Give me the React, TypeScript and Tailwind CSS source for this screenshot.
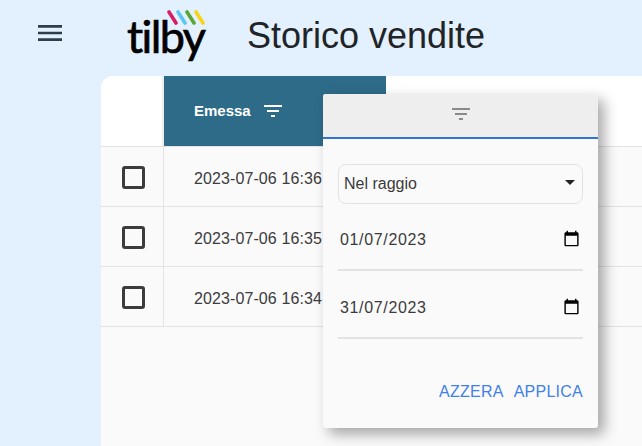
import React from 'react';

const rows = ['2023-07-06 16:36', '2023-07-06 16:35', '2023-07-06 16:34'];
const stripes = [
  { x: 3, color: '#d81e63' },
  { x: 12, color: '#5cc5f2' },
  { x: 21, color: '#5aa63a' },
  { x: 30, color: '#f7d416' },
];

const FilterIcon = ({ className }: { className: string }) => (
  <svg viewBox="0 0 18 12" className={className} fill="currentColor">
    <path d="M0 0h18v2H0zM3 5h12v2H3zM7 10h4v2H7z" />
  </svg>
);

const CalendarIcon = () => (
  <svg viewBox="0 0 24 24" className="w-[17px] h-[17px] text-black" fill="currentColor">
    <path d="M20 3h-1V1h-2v2H7V1H5v2H4c-1.1 0-2 .9-2 2v16c0 1.1.9 2 2 2h16c1.1 0 2-.9 2-2V5c0-1.1-.9-2-2-2zm0 18H4V8h16v13z" />
  </svg>
);

const Logo = () => (
  <div className="relative w-[80px] h-[50px] ml-[26px]">
    <span className="absolute left-0 top-[-2px] text-[45px] leading-[50px] font-normal text-black font-['Lato',sans-serif] tracking-[-1.6px] [-webkit-text-stroke:0.7px_black]">
      tilby
    </span>
    <svg viewBox="0 0 42 16" className="absolute left-[39px] top-[-3px] w-[42px] h-[16px]">
      {stripes.map((s) => (
        <line key={s.x} x1={s.x} y1={2} x2={s.x + 7} y2={13} stroke={s.color} strokeWidth={3.6} strokeLinecap="round" />
      ))}
    </svg>
  </div>
);

const DateField = ({ value }: { value: string }) => (
  <div className="flex items-center justify-between h-[67px] pl-[2px] pr-[3px] pt-[4px] border-b-2 border-[#e3e3e3] text-[16px] tracking-[0.65px] text-[#3a3a3a]">
    <span className="mt-[2px]">{value}</span>
    <CalendarIcon />
  </div>
);

export default function App() {
  return (
    <div className="relative w-[642px] h-[446px] overflow-hidden bg-[#e3f0fd] flex flex-col font-['Liberation_Sans',Arial,sans-serif]">
      <header className="h-[76px] shrink-0 flex items-center">
        <div className="w-[101px] pl-[34px]">
          <svg viewBox="0 0 24 24" className="w-[32px] h-[32px] text-[#2c3e48] -mt-[11px]" fill="currentColor">
            <path d="M3 18h18v-2H3v2zm0-5h18v-2H3v2zm0-7v2h18V6H3z" />
          </svg>
        </div>
        <Logo />
        <h1 className="ml-[40px] -mt-[4px] text-[36px] font-normal text-[#1f2428]">Storico vendite</h1>
      </header>

      <main className="flex-1 ml-[101px] bg-[#fafafa] rounded-tl-[12px] overflow-hidden">
        <div className="flex h-[71px] bg-white border-b border-[#e3e3e3]">
          <div className="w-[63px] border-r-2 border-[#ececec]" />
          <div className="w-[222px] h-[70px] bg-[#2d6b88] flex items-center pl-[30px] gap-[13px] text-white text-[15px] font-bold">
            <span className="mt-[1px]">Emessa</span>
            <FilterIcon className="w-[18px] h-[12px]" />
          </div>
        </div>
        {rows.map((r) => (
          <div key={r} className="flex h-[60px] border-b border-[#e3e3e3]">
            <div className="w-[63px] border-r border-[#e3e3e3] flex items-center justify-center">
              <div className="w-[23px] h-[23px] ml-[2px] mt-[1px] border-[3px] border-[#3c3c3c] rounded-[3px]" />
            </div>
            <div className="pl-[30px] pt-[5px] flex items-center text-[16px] tracking-[0.1px] text-[#3c3c3c]">{r}</div>
          </div>
        ))}
      </main>

      {/* filter popup */}
      <div className="absolute left-[323px] top-[94px] w-[275px] h-[334px] bg-[#fafafa] rounded-[3px] shadow-[6px_6px_14px_rgba(0,0,0,0.35)] flex flex-col">
        <div className="h-[45px] shrink-0 pb-[3px] bg-[#eeeeee] border-b-2 border-[#2f74d8] rounded-t-[3px] flex items-center justify-center">
          <FilterIcon className="w-[18px] h-[12px] text-[#8a8a8a]" />
        </div>
        <div className="flex-1 flex flex-col px-[15px] pt-[25px]">
          <div className="h-[40px] border border-[#e3e3e3] rounded-[8px] flex items-center justify-between pl-[5px] pr-[7px] text-[16px] text-[#3a3a3a]">
            Nel raggio
            <span className="-mt-[3px] w-0 h-0 border-x-[5px] border-x-transparent border-t-[5px] border-t-[#222]" />
          </div>
          <DateField value="01/07/2023" />
          <div className="h-[1px]" />
          <DateField value="31/07/2023" />
          <div className="flex justify-end gap-[10px] mt-[41px] text-[16px] tracking-[0.25px] text-[#3f80ea]">
            <span>AZZERA</span>
            <span>APPLICA</span>
          </div>
        </div>
      </div>
    </div>
  );
}
